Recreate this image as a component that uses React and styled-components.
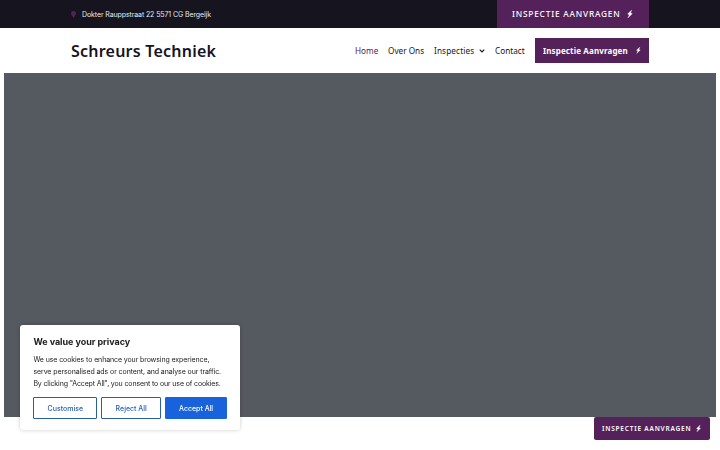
import styled, { createGlobalStyle } from "styled-components"

export default function HomePage () {
    return (
    <PageContainer>
        <GlobalStyle/>
        <TopBar>
            <Address>
                <PinIcon/>
                <span>Dokter Rauppstraat 22 5571 CG Bergeijk</span>
            </Address>
            <TopButton href="#">
                <span>INSPECTIE AANVRAGEN</span>
                <BoltIcon $size={8}/>
            </TopButton>
        </TopBar>

        <Header>
            <Logo>Schreurs Techniek</Logo>
            <Nav>
                <NavItem href="#" $active $width={23}>Home</NavItem>
                <NavItem href="#" $width={36}>Over Ons</NavItem>
                <NavItem href="#" $width={51} $spacing="0.14px">Inspecties <ChevronIcon/></NavItem>
                <NavItem href="#" $width={30}>Contact</NavItem>
                <NavButton href="#">
                    <span>Inspectie Aanvragen</span>
                    <BoltIcon $size={6.500}/>
                </NavButton>
            </Nav>
        </Header>

        <Hero/>

        <CookieCard>
            <CookieTitle>We value your privacy</CookieTitle>
            <CookieText>
                <Line $spacing="-0.1px">We use cookies to enhance your browsing experience,</Line>
                <Line $spacing="-0.085px">serve personalised ads or content, and analyse our traffic.</Line>
                <Line $spacing="-0.130px">By clicking "Accept All", you consent to our use of cookies.</Line>
            </CookieText>
            <CookieButtons>
                <CookieButton $width={64}>Customise</CookieButton>
                <CookieButton $width={60}>Reject All</CookieButton>
                <CookieButton $width={62} $filled>Accept All</CookieButton>
            </CookieButtons>
        </CookieCard>

        <FloatingButton href="#">
            <span>INSPECTIE AANVRAGEN</span>
            <BoltIcon $size={7}/>
        </FloatingButton>
    </PageContainer>
    )
}

function PinIcon () {
    return (
        <svg width="5" height="7" viewBox="0 0 10 14">
            <path d="M5 0a5 5 0 0 0-5 5c0 3.300 3.500 6 5 9 1.500-3 5-5.700 5-9a5 5 0 0 0-5-5z" fill="#54215a"/>
        </svg>
    )
}

function BoltIcon ({ $size }) {
    return (
        <svg width={$size * 0.7} height={$size} viewBox="0 0 11 16">
            <path d="M9.500 0 1 8 4.500 9.500 1.500 16 10.500 7.500 7 6z" fill="#fff" stroke="#fff" strokeWidth=".6"/>
        </svg>
    )
}

function ChevronIcon () {
    return (
        <svg width="6" height="4" viewBox="0 0 6 4">
            <path d="M.7.7 3 3 5.300.7" fill="none" stroke="#15141f" strokeWidth="1.100"/>
        </svg>
    )
}

const GlobalStyle = createGlobalStyle `
* {
    box-sizing:border-box;
}
body {
    margin:0;
    background: #FFFFFF;
    overflow:hidden;
}
a {
    text-decoration:none;
}
`

const PageContainer = styled.div `
display:flex;
flex-direction:column;
height:100vh;
font-family: 'Inter', sans-serif;
color: #15141F;
white-space:nowrap;
svg {
    flex:none;
}
`

const TopBar = styled.div `
display:flex;
justify-content:space-between;
height:28px;
padding: 0 71px;
background: #15141F;
`

const Address = styled.div `
display:flex;
align-items:center;
gap:6px;
font-size: 7px;
letter-spacing:-0.1px;
color: #E9E9EE;
`

const TopButton = styled.a `
display:flex;
align-items:center;
justify-content:space-between;
width:152px;
padding: 0 16.500px 1px 15px;
background: #54215A;
font-family: 'Noto Sans', sans-serif;
font-weight: 500;
font-size: 8.300px;
letter-spacing:0.8px;
color: #FFFFFF;
`

const Header = styled.header `
display:flex;
align-items:center;
justify-content:space-between;
height:45px;
padding: 0 71px;
`

const Logo = styled.h1 `
margin:0;
font-family: 'Noto Sans', sans-serif;
font-weight: 600;
font-size: 16px;
line-height:20px;
letter-spacing:0.23px;
`

const Nav = styled.nav `
display:flex;
align-items:center;
gap:10px;
`

const NavItem = styled.a `
display:flex;
align-items:center;
justify-content:space-between;
width: ${props => props.$width}px;
font-family: 'Noto Sans', sans-serif;
font-size: 8.200px;
letter-spacing: ${props => props.$spacing || "0"};
color: ${props => props.$active ? "#54215A" : "#15141F"};
`

const NavButton = styled.a `
display:flex;
align-items:center;
justify-content:space-between;
width:114px;
height:25px;
padding: 0 8px;
background: #54215A;
font-family: 'Noto Sans', sans-serif;
font-weight: 700;
font-size: 8px;
letter-spacing:0.13px;
color: #FFFFFF;
`

const Hero = styled.section `
height:344px;
margin: 0 4px;
background: #555960;
`

const CookieCard = styled.div `
position:fixed;
left:20px;
top:325px;
width:220px;
height:105px;
padding: 11px 13px 0 13.400px;
background: #FFFFFF;
border-radius: 3px;
box-shadow: 0 0 4px rgba(0, 0, 0, 0.2);
color: #212121;
`

const CookieTitle = styled.h2 `
margin:0;
font-weight: 700;
font-size: 9px;
line-height:12px;
letter-spacing:-0.04px;
`

const CookieText = styled.p `
margin: 6px 0 7.400px;
font-size: 7px;
line-height:12px;
`

const Line = styled.span `
display:block;
letter-spacing: ${props => props.$spacing};
`

const CookieButtons = styled.div `
display:flex;
gap:4px;
`

const CookieButton = styled.button `
width: ${props => props.$width}px;
height:22px;
padding:0;
border: 1px solid ${props => props.$filled ? "#1863DC" : "#2860A8"};
border-radius: 1px;
background: ${props => props.$filled ? "#1863DC" : "#FFFFFF"};
font-family: inherit;
font-weight: 500;
font-size: 7px;
color: ${props => props.$filled ? "#FFFFFF" : "#2860B8"};
`

const FloatingButton = styled.a `
position:fixed;
left:594px;
top:417px;
display:flex;
align-items:center;
justify-content:space-between;
width:116px;
height:23px;
padding: 0 9px 0 8px;
border-radius: 2px;
background: #54215A;
font-family: 'Noto Sans', sans-serif;
font-weight: 600;
font-size: 6.500px;
letter-spacing:0.8px;
color: #FFFFFF;
`
